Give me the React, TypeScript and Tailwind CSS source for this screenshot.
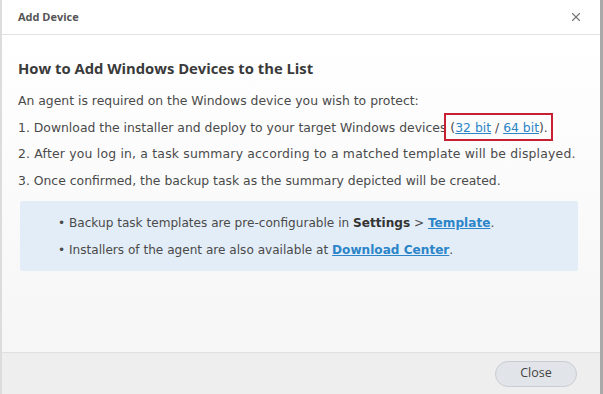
import { X } from "lucide-react";

const body = { fontFamily: '"DejaVu Sans", Verdana, sans-serif' };

const AddDeviceDialog = () => {
  return (
    <div className="w-[603px] h-[394px] flex flex-col bg-white border-l-2 border-l-[#dcdcdc] border-r-[3px] border-r-[#a9a9a9] overflow-hidden">
      {/* header */}
      <div className="h-[35px] flex items-center justify-between pl-[16px] pr-[17px] border-b border-[#e2e2e2] bg-white">
        <span className="text-[11px] font-bold text-[#555]" style={{ fontFamily: '"Open Sans", sans-serif' }}>
          Add Device
        </span>
        <X className="w-[14px] h-[14px] text-[#777]" strokeWidth={2} />
      </div>

      {/* content */}
      <div className="flex-1 bg-gradient-to-b from-white to-[#f6f6f6] pl-[16px] pr-[20px] pt-[22px]">
        <h2 className="text-[14.8px] leading-[22px] font-bold text-[#3a3a3a]" style={{ fontFamily: '"Open Sans", sans-serif' }}>
          How to Add Windows Devices to the List
        </h2>
        <div className="mt-[9px] text-[12.4px] leading-[26.5px] text-[#4a4a4a] whitespace-nowrap" style={body}>
          <p>An agent is required on the Windows device you wish to protect:</p>
          <p>
            1. Download the installer and deploy to your target Windows devices{" "}
            <span className="relative">
              (<a className="text-[#2b85c8] underline">32 bit</a> / <a className="text-[#2b85c8] underline">64 bit</a>).
              <span className="absolute -left-[6px] -right-[5px] -top-[7px] -bottom-[6px] border-2 border-[#c62032]" />
            </span>
          </p>
          <p className="tracking-[0.2px]">2. After you log in, a task summary according to a matched template will be displayed.</p>
          <p>3. Once confirmed, the backup task as the summary depicted will be created.</p>
        </div>

        <div className="mt-[7px] ml-[2px] mr-[2px] bg-[#e3edf8] rounded-[2px] pl-[38px] pt-[9px] pb-[7px] text-[12.1px] leading-[27px] text-[#4a4a4a] whitespace-nowrap" style={body}>
          <p>
            • Backup task templates are pre-configurable in <b className="text-[#333]">Settings</b> &gt;{" "}
            <a className="font-bold text-[#2b85c8] underline">Template</a>.
          </p>
          <p>
            • Installers of the agent are also available at{" "}
            <a className="font-bold text-[#2b85c8] underline">Download Center</a>.
          </p>
        </div>
      </div>

      {/* footer */}
      <div className="h-[42px] flex items-center justify-end pr-[23px] border-t border-[#e0e0e0] bg-[#eeeeee]">
        <button
          className="w-[82px] h-[26px] rounded-full bg-[#e1e4e8] border border-[#c9cdd3] text-[12.5px] text-[#444]"
          style={{ fontFamily: '"Open Sans", sans-serif' }}
        >
          Close
        </button>
      </div>
    </div>
  );
};

export default function App() {
  return <AddDeviceDialog />;
}
